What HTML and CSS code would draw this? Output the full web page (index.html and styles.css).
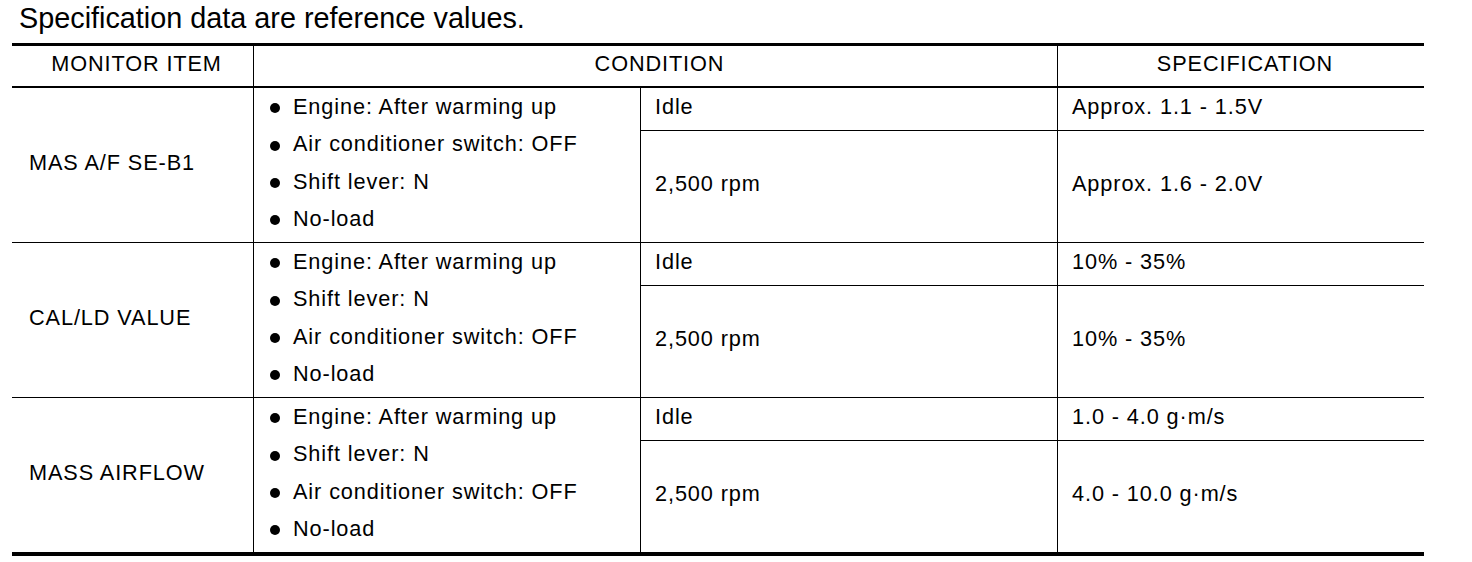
FILE: index.html
```html
<!DOCTYPE html>
<html lang="en">
<head>
<meta charset="utf-8">
<title>Specification data</title>
<link rel="stylesheet" href="styles.css">
</head>
<body>
<p class="note">Specification data are reference values.</p>
<div class="spec-table">
  <div class="cell head">MONITOR ITEM</div>
  <div class="cell head span2 divider">CONDITION</div>
  <div class="cell head divider">SPECIFICATION</div>

  <div class="cell item">MAS A/F SE-B1</div>
  <div class="cell conds divider">
    <ul>
      <li>Engine: After warming up</li>
      <li>Air conditioner switch: OFF</li>
      <li>Shift lever: N</li>
      <li>No-load</li>
    </ul>
  </div>
  <div class="cell top divider">Idle</div>
  <div class="cell top divider">Approx. 1.1 - 1.5V</div>
  <div class="cell mid divider">2,500 rpm</div>
  <div class="cell mid divider">Approx. 1.6 - 2.0V</div>

  <div class="cell item">CAL/LD VALUE</div>
  <div class="cell conds divider">
    <ul>
      <li>Engine: After warming up</li>
      <li>Shift lever: N</li>
      <li>Air conditioner switch: OFF</li>
      <li>No-load</li>
    </ul>
  </div>
  <div class="cell top divider">Idle</div>
  <div class="cell top divider">10% - 35%</div>
  <div class="cell mid divider">2,500 rpm</div>
  <div class="cell mid divider">10% - 35%</div>

  <div class="cell item last">MASS AIRFLOW</div>
  <div class="cell conds divider last">
    <ul>
      <li>Engine: After warming up</li>
      <li>Shift lever: N</li>
      <li>Air conditioner switch: OFF</li>
      <li>No-load</li>
    </ul>
  </div>
  <div class="cell top divider">Idle</div>
  <div class="cell top divider">1.0 - 4.0 g·m/s</div>
  <div class="cell mid divider last">2,500 rpm</div>
  <div class="cell mid divider last">4.0 - 10.0 g·m/s</div>
</div>
</body>
</html>
```
FILE: styles.css
```css
* { box-sizing: border-box; }

html, body {
  margin: 0;
  padding: 0;
  background: #fff;
  color: #000;
  font-family: "Liberation Sans", Arial, sans-serif;
}

.note {
  margin: 0 0 0 19px;
  padding-top: 2px;
  font-size: 28.8px;
  line-height: 33px;
}

.spec-table {
  margin: 8px 0 0 12px;
  width: 1412px;
  display: grid;
  grid-template-columns: 241px 387px 417px 367px;
  grid-template-rows: 42px 43px 112px 43px 112px 43px 111px;
  border-top: 3px solid #000;
  border-bottom: 4px solid #000;
  font-size: 21.7px;
  letter-spacing: 0.9px;
}

.cell {
  border-bottom: 1px solid #000;
  display: flex;
}

.cell.last { border-bottom: none; }

.divider { border-left: 1px solid #000; }

.head {
  border-bottom: 2px solid #000;
  align-items: center;
  justify-content: center;
  padding: 0 0 4px 8px;
}

.span2 { grid-column: span 2; }

.item {
  grid-row: span 2;
  align-items: center;
  padding: 0 0 5px 17px;
}

.conds {
  grid-row: span 2;
  padding-left: 16px;
}

.conds ul {
  margin: 0;
  padding: 0;
  list-style: none;
}

.conds li {
  display: flex;
  align-items: center;
  line-height: 37.4px;
}

.conds li::before {
  content: "";
  width: 10px;
  height: 10px;
  border-radius: 50%;
  background: #000;
  margin: 3px 13px 0 0;
  flex: none;
}

.top {
  align-items: flex-start;
  line-height: 37.4px;
  padding-left: 14px;
}

.mid {
  align-items: center;
  padding: 0 0 5px 14px;
}
```
